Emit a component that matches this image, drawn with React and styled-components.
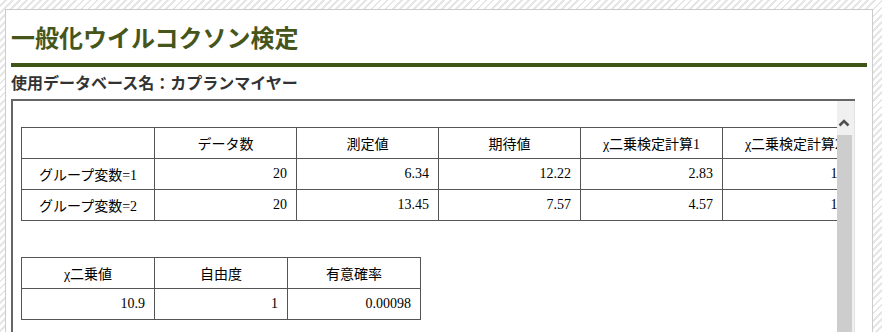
import styled, { createGlobalStyle } from "styled-components";

const GlobalStyle = createGlobalStyle`
  html, body {
    margin: 0;
    height: 100%;
    overflow: hidden;
  }
  body {
    background: repeating-linear-gradient(135deg, #ffffff 0 3px, #e6e6e6 3px 5px);
    font-family: "Liberation Serif", "Noto Sans CJK JP", serif;
    color: #000;
  }
`;

const Page = styled.div`
  padding: 9px 0 0 5px;
  width: 873px;
  height: 100vh;
  box-sizing: border-box;
`;

const Panel = styled.section`
  background: #fff;
  border: 1px solid #cccccc;
  border-bottom: none;
  height: 100%;
  box-sizing: border-box;
  padding: 0 5px;
`;

const Title = styled.h1`
  margin: 0;
  padding: 10px 0 9px;
  font-family: "Noto Sans CJK JP", sans-serif;
  font-size: 24px;
  line-height: 34px;
  font-weight: bold;
  color: #46561a;
  border-bottom: 4px solid #3f5417;
`;

const SubTitle = styled.h2`
  margin: 0;
  padding: 5px 0 7px;
  font-family: "Noto Sans CJK JP", sans-serif;
  font-size: 16px;
  line-height: 20px;
  font-weight: bold;
  color: #333;
`;

const ScrollBox = styled.div`
  display: flex;
  width: 844px;
  height: 300px;
  border-top: 2px solid #666;
  border-left: 2px solid #666;
  box-sizing: border-box;
`;

const Viewport = styled.div`
  flex: 1;
  min-width: 0;
  overflow: hidden;
  padding: 26px 8px 0;
`;

const ScrollBar = styled.div`
  width: 18px;
  display: flex;
  flex-direction: column;
  background: #f0f0f0;
  border-right: 1px solid #e2e2e2;
  box-sizing: border-box;
`;

const ArrowButton = styled.div`
  height: 34px;
  display: flex;
  justify-content: center;
  padding: 17px 3px 0 0;
  box-sizing: border-box;
`;

const Thumb = styled.div`
  height: 230px;
  width: 15px;
  background: #cdcdcd;
`;

const Table = styled.table`
  border-collapse: collapse;
  font-size: 14px;
  margin-bottom: ${(p) => p.$gap || 0}px;
  table-layout: fixed;
`;

const Cell = styled.td`
  border: 1px solid #555;
  height: 31px;
  width: ${(p) => p.$w}px;
  min-width: ${(p) => p.$w}px;
  box-sizing: border-box;
  padding: 0 9px;
  text-align: ${(p) => (p.$center ? "center" : "right")};
  white-space: nowrap;
  overflow: hidden;
`;

const Chi = styled.span`
  font-family: "Liberation Serif", serif;
`;

const head1 = ["", "データ数", "測定値", "期待値", "二乗検定計算1", "二乗検定計算2"];
const rows1 = [
  ["グループ変数=1", "20", "6.34", "12.22", "2.83", "1.28"],
  ["グループ変数=2", "20", "13.45", "7.57", "4.57", "1.28"],
];
const widths1 = [133, 142, 142, 142, 142, 142];

export default function App() {
  return (
    <>
      <GlobalStyle />
      <Page>
        <Panel>
          <Title>一般化ウイルコクソン検定</Title>
          <SubTitle>使用データベース名：カプランマイヤー</SubTitle>
          <ScrollBox>
            <Viewport>
              <Table $gap={36}>
                <tbody>
                  <tr>
                    {head1.map((h, i) => (
                      <Cell key={i} $center $w={widths1[i]}>
                        {i >= 4 && <Chi>χ</Chi>}
                        {h}
                      </Cell>
                    ))}
                  </tr>
                  {rows1.map((r, ri) => (
                    <tr key={ri}>
                      {r.map((c, i) => (
                        <Cell key={i} $center={i === 0} $w={widths1[i]}>
                          {c}
                        </Cell>
                      ))}
                    </tr>
                  ))}
                </tbody>
              </Table>
              <Table>
                <tbody>
                  <tr>
                    <Cell $center $w={133}>
                      <Chi>χ</Chi>二乗値
                    </Cell>
                    <Cell $center $w={133}>自由度</Cell>
                    <Cell $center $w={133}>有意確率</Cell>
                  </tr>
                  <tr>
                    <Cell $w={133}>10.9</Cell>
                    <Cell $w={133}>1</Cell>
                    <Cell $w={133}>0.00098</Cell>
                  </tr>
                </tbody>
              </Table>
            </Viewport>
            <ScrollBar>
              <ArrowButton>
                <svg width="12" height="9" viewBox="0 0 12 9">
                  <polyline
                    points="1.5,7.5 6,3 10.5,7.5"
                    fill="none"
                    stroke="#505050"
                    strokeWidth="2.6"
                  />
                </svg>
              </ArrowButton>
              <Thumb />
            </ScrollBar>
          </ScrollBox>
        </Panel>
      </Page>
    </>
  );
}
